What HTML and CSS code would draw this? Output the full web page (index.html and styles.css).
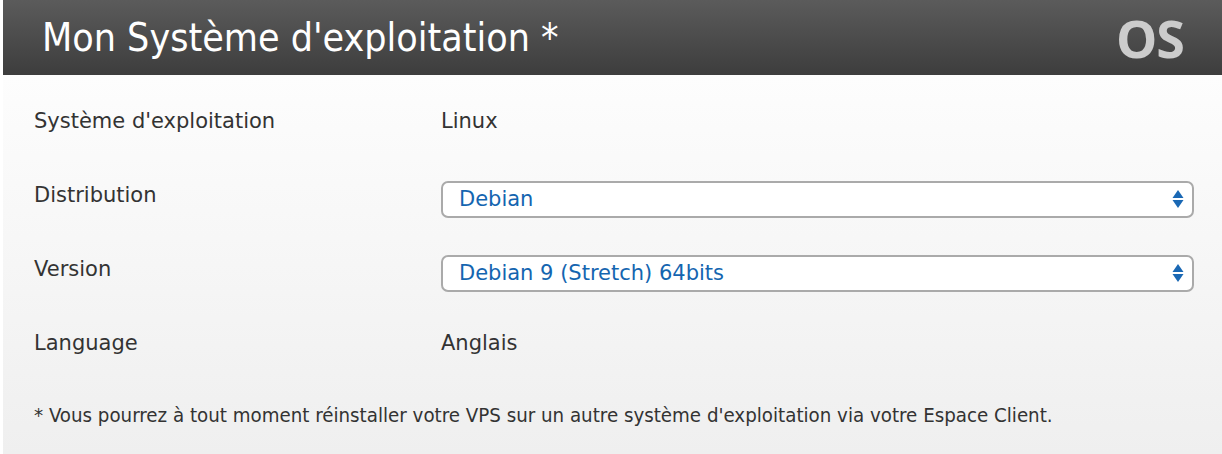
FILE: index.html
```html
<!DOCTYPE html>
<html lang="fr">
<head>
<meta charset="utf-8">
<title>Mon Système d'exploitation</title>
<link rel="stylesheet" href="styles.css">
</head>
<body>
<div class="panel">
  <div class="header">
    <h1 class="title">Mon Système d'exploitation *</h1>
    <span class="badge">OS</span>
  </div>
  <div class="content">
    <div class="row">
      <div class="label">Système d'exploitation</div>
      <div class="value">Linux</div>
    </div>
    <div class="row">
      <div class="label">Distribution</div>
      <div class="value">
        <div class="select"><span>Debian</span>
          <svg class="arrows" width="12" height="20" viewBox="0 0 12 20"><path d="M6 1 L11.5 9 L0.5 9 Z M0.5 11 L11.5 11 L6 19 Z" fill="#1a68b4"/></svg>
        </div>
      </div>
    </div>
    <div class="row">
      <div class="label">Version</div>
      <div class="value">
        <div class="select"><span>Debian 9 (Stretch) 64bits</span>
          <svg class="arrows" width="12" height="20" viewBox="0 0 12 20"><path d="M6 1 L11.5 9 L0.5 9 Z M0.5 11 L11.5 11 L6 19 Z" fill="#1a68b4"/></svg>
        </div>
      </div>
    </div>
    <div class="row">
      <div class="label">Language</div>
      <div class="value">Anglais</div>
    </div>
    <p class="note">* Vous pourrez à tout moment réinstaller votre VPS sur un autre système d'exploitation via votre Espace Client.</p>
  </div>
</div>
</body>
</html>
```
FILE: styles.css
```css
html, body {
  margin: 0;
  padding: 0;
  background: #ffffff;
}
body {
  font-family: "DejaVu Sans", sans-serif;
  color: #333333;
  width: 1222px;
  height: 454px;
  overflow: hidden;
}
.panel {
  margin-left: 3px;
  height: 454px;
  display: flex;
  flex-direction: column;
}
.header {
  height: 75px;
  background: linear-gradient(#5b5b5b, #3d3d3d);
  display: flex;
  align-items: center;
  justify-content: space-between;
  padding: 0 38px 0 39px;
}
.title {
  margin: 0;
  font-family: "DejaVu Sans Condensed", "DejaVu Sans", sans-serif;
  font-weight: normal;
  font-size: 39px;
  color: #ffffff;
}
.badge {
  font-family: "Open Sans", "DejaVu Sans", sans-serif;
  font-weight: bold;
  font-size: 52px;
  line-height: 1;
  color: #cccccc;
  letter-spacing: -1px;
}
.content {
  flex: 1;
  background: linear-gradient(#fdfdfd, #efefef);
  padding: 0 28px 0 31px;
}
.row {
  height: 74px;
  display: flex;
  align-items: center;
  font-size: 21px;
}
.row:first-child { margin-top: 9px; }
.label {
  width: 407px;
}
.value {
  flex: 1;
}
.select {
  height: 33px;
  margin-top: 8px;
  border: 2px solid #aaaaaa;
  border-radius: 7px;
  background: #ffffff;
  color: #1465b0;
  display: flex;
  align-items: center;
  justify-content: space-between;
  padding: 0 8px 0 16px;
}
.select span { line-height: 1; }
.arrows { display: block; }
.note {
  margin: 23px 0 0 0;
  font-family: "DejaVu Sans Condensed", "DejaVu Sans", sans-serif;
  font-size: 20.3px;
  color: #333333;
}
```
